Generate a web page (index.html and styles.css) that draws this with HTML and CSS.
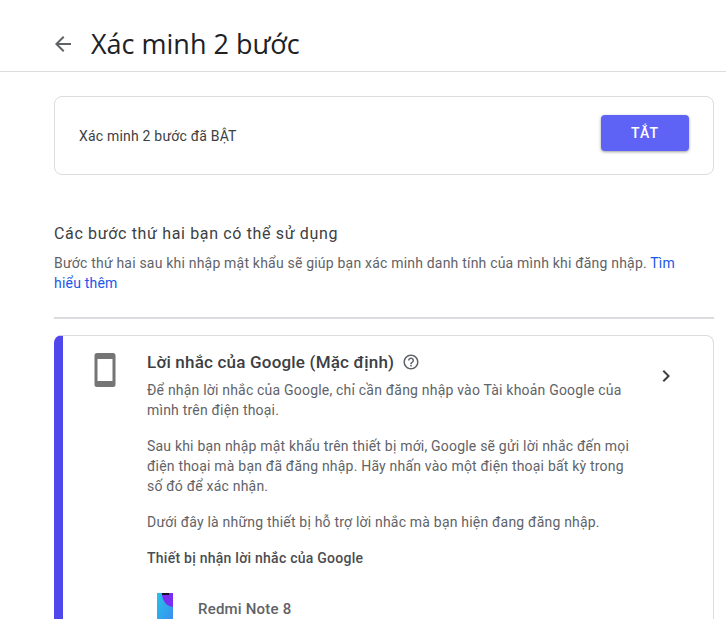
FILE: index.html
```html
<!DOCTYPE html>
<html lang="vi">
<head>
    <meta charset="utf-8">
    <title>Xác minh 2 bước</title>
    <link rel="stylesheet" href="styles.css">
</head>
<body>

    <header class="top-bar">
        <svg class="back-icon" width="24" height="24" viewBox="0 0 24 24"><path d="M20 11H7.830l5.590-5.590L12 4l-8 8 8 8 1.410-1.410L7.830 13H20z"/></svg>
        <h1>Xác minh 2 bước</h1>
    </header>

    <main class="content">
        <section class="status-card">
            <span>Xác minh 2 bước đã BẬT</span>
            <button class="off-button">TẮT</button>
        </section>

        <h2>Các bước thứ hai bạn có thể sử dụng</h2>
        <p class="intro">Bước thứ hai sau khi nhập mật khẩu sẽ giúp bạn xác minh danh tính của mình khi đăng nhập. <a href="#">Tìm hiểu thêm</a></p>

        <hr class="divider">

        <section class="prompt-card">
            <div class="phone-col">
                <svg width="24" height="36" viewBox="0 0 24 36"><path fill-rule="evenodd" d="M3 1h16c1.700 0 2.500.9 2.500 2.500v29c0 1.700-.8 2.500-2.500 2.500H3c-1.700 0-2.500-.8-2.500-2.500v-29C.5 1.900 1.300 1 3 1zM3.500 7v22h15V7z"/></svg>
            </div>
            <div class="prompt-body">
                <h3>Lời nhắc của Google (Mặc định)
                    <svg class="help-icon" width="18" height="18" viewBox="0 0 24 24"><path d="M11 18h2v-2h-2v2zm1-16C6.480 2 2 6.480 2 12s4.480 10 10 10 10-4.480 10-10S17.520 2 12 2zm0 18c-4.410 0-8-3.590-8-8s3.590-8 8-8 8 3.590 8 8-3.590 8-8 8zm0-14c-2.210 0-4 1.790-4 4h2c0-1.100.9-2 2-2s2 .9 2 2c0 2-3 1.750-3 5h2c0-2.250 3-2.500 3-5 0-2.210-1.790-4-4-4z"/></svg>
                </h3>
                <p>Để nhận lời nhắc của Google, chỉ cần đăng nhập vào Tài khoản Google của mình trên điện thoại.</p>
                <p>Sau khi bạn nhập mật khẩu trên thiết bị mới, Google sẽ gửi lời nhắc đến mọi điện thoại mà bạn đã đăng nhập. Hãy nhấn vào một điện thoại bất kỳ trong số đó để xác nhận.</p>
                <p>Dưới đây là những thiết bị hỗ trợ lời nhắc mà bạn hiện đang đăng nhập.</p>
                <h4>Thiết bị nhận lời nhắc của Google</h4>
                <div class="device">
                    <svg class="device-pic" width="16" height="28" viewBox="0 0 16 28">
                        <defs>
                            <linearGradient id="screen" x1="0" y1="0" x2="1" y2="1">
                                <stop offset="0" stop-color="#25c4e8"/>
                                <stop offset="1" stop-color="#3b8cf0"/>
                            </linearGradient>
                        </defs>
                        <rect width="16" height="28" fill="url(#screen)"/>
                        <path d="M5 0h11v14C10 13 5 9 5 0z" fill="#7a2ff0"/>
                        <path d="M5 0h7v2H5z" fill="#1a1030"/>
                    </svg>
                    <span>Redmi Note 8</span>
                </div>
            </div>
            <svg class="chevron" width="24" height="24" viewBox="0 0 24 24"><path d="M10 6 8.590 7.410 13.170 12l-4.580 4.590L10 18l6-6z"/></svg>
        </section>
    </main>

</body>
</html>
```

FILE: styles.css
```css
html, body {
    height: 619px;
    overflow: hidden;
}
body {
    margin: 0;
    background: #fff;
    font-family: Roboto, sans-serif;
    font-size: 14px;
    line-height: 20px;
    letter-spacing: 0.2px;
    color: #5f6368;
}

.top-bar {
    display: flex;
    align-items: center;
    height: 55px;
    padding: 16px 0 0 51px;
    border-bottom: 1px solid #dadce0;
}
.back-icon {
    fill: #5f6368;
    margin-right: 16px;
}
h1 {
    margin: 0;
    font-family: "Open Sans", sans-serif;
    font-size: 27px;
    font-weight: 400;
    letter-spacing: 0;
    color: #202124;
}

.content {
    width: 660px;
    margin-left: 54px;
    padding-top: 24px;
}

.status-card {
    display: flex;
    align-items: center;
    justify-content: space-between;
    height: 77px;
    padding: 0 24px;
    border: 1px solid #dadce0;
    border-radius: 8px;
    color: #3c4043;
}
.off-button {
    width: 88px;
    height: 36px;
    margin-bottom: 6px;
    border: none;
    border-radius: 4px;
    background: #5f63f5;
    color: #fff;
    font-family: Roboto, sans-serif;
    font-size: 14px;
    font-weight: 500;
    letter-spacing: 1px;
    box-shadow: 0 1px 3px rgba(60, 64, 67, 0.5);
}

h2 {
    margin: 49px 0 0;
    font-size: 16px;
    font-weight: 400;
    line-height: 20px;
    letter-spacing: 0.65px;
    color: #3c4043;
}
.intro {
    margin: 9px 0 0;
    padding-right: 30px;
}
.intro a {
    color: #1a56e8;
    text-decoration: none;
}

.divider {
    height: 2px;
    margin: 24px 0 16px;
    border: none;
    background: #dadce0;
}

.prompt-card {
    display: flex;
    height: 340px;
    border: 1px solid #dadce0;
    border-left: 9px solid #4f46ec;
    border-radius: 8px;
}
.phone-col {
    width: 84px;
    padding: 16px 0 0 31px;
    box-sizing: border-box;
    fill: #757575;
}
.prompt-body {
    width: 490px;
}
h3 {
    display: flex;
    align-items: center;
    gap: 8px;
    margin: 16px 0 0;
    font-size: 17px;
    font-weight: 500;
    line-height: 20px;
    color: #3c4043;
}
.help-icon {
    fill: #5f6368;
}
.prompt-body p {
    margin: 8px 0 16px;
}
h4 {
    margin: 16px 0 0;
    font-size: 14px;
    font-weight: 500;
    letter-spacing: 0.25px;
    color: #4a4d51;
}
.device {
    display: flex;
    align-items: center;
    gap: 25px;
    margin-top: 25px;
    padding-left: 10px;
    font-size: 15px;
    font-weight: 500;
}
.device span {
    margin-top: 4px;
}
.chevron {
    fill: #3c4043;
    margin: 28px 0 0 17px;
}
```
